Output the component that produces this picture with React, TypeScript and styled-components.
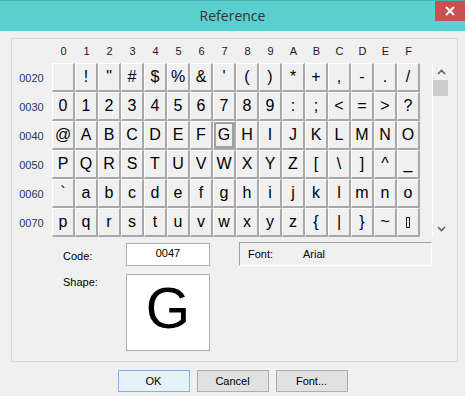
import React from "react";
import styled, { createGlobalStyle, css } from "styled-components";

const Global = createGlobalStyle`
  html, body { margin: 0; padding: 0; background: #f0f0f0; }
  * { box-sizing: border-box; }
`;

const Window = styled.div`
  width: 465px;
  height: 396px;
  background: #f0f0f0;
  display: flex;
  flex-direction: column;
  font-family: "Liberation Sans", Arial, sans-serif;
  overflow: hidden;
`;

const TitleBar = styled.div`
  height: 31px;
  background: #5bcfcf;
  border-top: 1px solid #4aaeb0;
  display: grid;
  grid-template-columns: 1fr auto 1fr;
  align-items: start;
`;

const Title = styled.div`
  grid-column: 2;
  font-family: "Open Sans", "Noto Sans", sans-serif;
  font-size: 14px;
  color: #333;
  line-height: 30px;
`;

const CloseButton = styled.div`
  grid-column: 3;
  justify-self: end;
  width: 30px;
  height: 20px;
  background: #c75050;
  display: flex;
  align-items: center;
  justify-content: center;
`;

const Body = styled.div`
  flex: 1;
  display: flex;
  flex-direction: column;
  padding-top: 7px;
`;

const Panel = styled.div`
  margin-left: 11px;
  width: 447px;
  height: 324px;
  border: 1px solid #d9d9d9;
  display: flex;
  flex-direction: column;
`;

const TopArea = styled.div`
  display: flex;
  align-items: flex-start;
`;

const CharGrid = styled.div`
  display: grid;
  grid-template-columns: 40px repeat(16, 23px);
  grid-template-rows: 24px repeat(6, 29px);
`;

const ColHeader = styled.div`
  display: flex;
  align-items: center;
  justify-content: center;
  font-size: 11px;
  color: #1a1a1a;
`;

const RowLabel = styled.div`
  display: flex;
  align-items: center;
  justify-content: center;
  font-size: 11px;
  color: #1d3a5f;
  padding-right: 1px;
`;

const Cell = styled.div<{ $selected?: boolean }>`
  width: 23px;
  height: 29px;
  border-top: 1px solid #ffffff;
  border-left: 1px solid #ffffff;
  border-right: 2px solid #a8a8a8;
  border-bottom: 2px solid #a8a8a8;
  display: flex;
  align-items: center;
  justify-content: center;
  font-size: 16px;
  color: #000;
  ${(p) =>
    p.$selected &&
    css`
      box-shadow: inset 0 0 0 2px #a0a0a0;
    `}
`;

const BoxGlyph = styled.span`
  display: inline-block;
  width: 4px;
  height: 11px;
  border: 1px solid #222;
`;

const ScrollBar = styled.div`
  margin-top: 24px;
  margin-left: 12px;
  width: 17px;
  height: 174px;
  border-left: 1px solid #ffffff;
  display: flex;
  flex-direction: column;
`;

const ScrollArrow = styled.div`
  height: 17px;
  display: flex;
  align-items: center;
  justify-content: center;
`;

const Thumb = styled.div`
  width: 15px;
  height: 16px;
  background: #cdcdcd;
`;

const Track = styled.div`
  flex: 1;
`;

const LowerArea = styled.div`
  display: grid;
  grid-template-columns: 63px 84px 29px 193px;
  grid-template-rows: 24px 77px;
  row-gap: 8px;
  padding-left: 51px;
  margin-top: 5px;
`;

const FieldLabel = styled.div<{ $top?: boolean }>`
  font-size: 11px;
  color: #000;
  display: flex;
  align-items: ${(p) => (p.$top ? "flex-start" : "center")};
  padding-top: ${(p) => (p.$top ? "2px" : "3px")};
`;

const CodeBox = styled.div`
  align-self: end;
  height: 23px;
  background: #fff;
  border: 1px solid #adadad;
  font-size: 11px;
  display: flex;
  justify-content: center;
  padding-top: 3px;
`;

const ShapeBox = styled.div`
  background: #fff;
  border: 1px solid #adadad;
  display: flex;
  align-items: center;
  justify-content: center;
  font-size: 57px;
  color: #000;
  padding-bottom: 9px;
`;

const FontBox = styled.div`
  grid-column: 4;
  height: 24px;
  border-top: 1px solid #a0a0a0;
  border-left: 1px solid #a0a0a0;
  border-right: 1px solid #ffffff;
  border-bottom: 1px solid #ffffff;
  display: flex;
  align-items: center;
  padding-left: 8px;
  font-size: 11px;
  color: #000;
`;

const FontKey = styled.span`
  width: 55px;
`;

const ButtonRow = styled.div`
  display: flex;
  justify-content: center;
  gap: 7px;
  margin-top: 8px;
`;

const Button = styled.div<{ $default?: boolean }>`
  width: 72px;
  height: 22px;
  border: 1px solid ${(p) => (p.$default ? "#7eb4ea" : "#adadad")};
  background: ${(p) => (p.$default ? "#e5f1fb" : "#e1e1e1")};
  display: flex;
  align-items: center;
  justify-content: center;
  font-size: 11px;
  color: #000;
`;

const hex = "0123456789ABCDEF".split("");
const rows = [0x20, 0x30, 0x40, 0x50, 0x60, 0x70];

export default function App() {
  return (
    <>
      <Global />
      <Window>
        <TitleBar>
          <Title>Reference</Title>
          <CloseButton>
            <svg width="10" height="10" viewBox="0 0 10 10">
              <path d="M1 1 L9 9 M9 1 L1 9" stroke="#fff" strokeWidth="2" />
            </svg>
          </CloseButton>
        </TitleBar>
        <Body>
          <Panel>
            <TopArea>
              <CharGrid>
                <div />
                {hex.map((h) => (
                  <ColHeader key={h}>{h}</ColHeader>
                ))}
                {rows.map((r) => (
                  <React.Fragment key={r}>
                    <RowLabel>{r.toString(16).toUpperCase().padStart(4, "0")}</RowLabel>
                    {hex.map((h, i) => {
                      const code = r + i;
                      return (
                        <Cell key={h} $selected={code === 0x47}>
                          {code === 0x7f ? <BoxGlyph /> : String.fromCharCode(code)}
                        </Cell>
                      );
                    })}
                  </React.Fragment>
                ))}
              </CharGrid>
              <ScrollBar>
                <ScrollArrow>
                  <svg width="9" height="6" viewBox="0 0 9 6">
                    <path d="M1 5 L4.5 1.5 L8 5" stroke="#606060" strokeWidth="1.6" fill="none" />
                  </svg>
                </ScrollArrow>
                <Thumb />
                <Track />
                <ScrollArrow>
                  <svg width="9" height="6" viewBox="0 0 9 6">
                    <path d="M1 1 L4.5 4.5 L8 1" stroke="#606060" strokeWidth="1.6" fill="none" />
                  </svg>
                </ScrollArrow>
              </ScrollBar>
            </TopArea>
            <LowerArea>
              <FieldLabel>Code:</FieldLabel>
              <CodeBox>0047</CodeBox>
              <FontBox>
                <FontKey>Font:</FontKey>
                <span>Arial</span>
              </FontBox>
              <FieldLabel $top>Shape:</FieldLabel>
              <ShapeBox>G</ShapeBox>
            </LowerArea>
          </Panel>
          <ButtonRow>
            <Button $default>OK</Button>
            <Button>Cancel</Button>
            <Button>Font...</Button>
          </ButtonRow>
        </Body>
      </Window>
    </>
  );
}
